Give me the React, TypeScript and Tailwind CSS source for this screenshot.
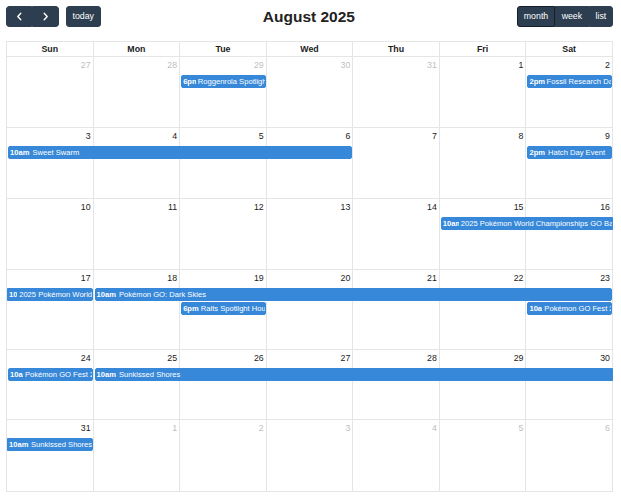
import React from 'react';

type CalEvent = {
  col: number;
  span: number;
  level: 1 | 2;
  time: string;
  title: string;
  start?: boolean;
  end?: boolean;
};

type Week = {
  height: string;
  days: { n: number; other?: boolean }[];
  events: CalEvent[];
};

const COL_START = ['', 'col-start-1', 'col-start-2', 'col-start-3', 'col-start-4', 'col-start-5', 'col-start-6', 'col-start-7'];
const COL_SPAN = ['', 'col-span-1', 'col-span-2', 'col-span-3', 'col-span-4', 'col-span-5', 'col-span-6', 'col-span-7'];
const LEVEL_ROW = { 1: 'row-start-2', 2: 'row-start-3' };

const DAY_NAMES = ['Sun', 'Mon', 'Tue', 'Wed', 'Thu', 'Fri', 'Sat'];

const WORLDS = '2025 Pokémon World Championships GO Battle Weekend';
const FEST = 'Pokémon GO Fest 2025: Global';

const WEEKS: Week[] = [
  {
    height: 'h-[71px]',
    days: [{ n: 27, other: true }, { n: 28, other: true }, { n: 29, other: true }, { n: 30, other: true }, { n: 31, other: true }, { n: 1 }, { n: 2 }],
    events: [
      { col: 3, span: 1, level: 1, time: '6pm', title: 'Roggenrola Spotlight Hour' },
      { col: 7, span: 1, level: 1, time: '2pm', title: 'Fossil Research Day' },
    ],
  },
  {
    height: 'h-[71px]',
    days: [3, 4, 5, 6, 7, 8, 9].map((n) => ({ n })),
    events: [
      { col: 1, span: 4, level: 1, time: '10am', title: 'Sweet Swarm' },
      { col: 7, span: 1, level: 1, time: '2pm', title: 'Hatch Day Event' },
    ],
  },
  {
    height: 'h-[71px]',
    days: [10, 11, 12, 13, 14, 15, 16].map((n) => ({ n })),
    events: [{ col: 6, span: 2, level: 1, time: '10am', title: WORLDS, end: false }],
  },
  {
    height: 'h-[80px]',
    days: [17, 18, 19, 20, 21, 22, 23].map((n) => ({ n })),
    events: [
      { col: 1, span: 1, level: 1, time: '10am', title: WORLDS, start: false },
      { col: 2, span: 6, level: 1, time: '10am', title: 'Pokémon GO: Dark Skies' },
      { col: 3, span: 1, level: 2, time: '6pm', title: 'Ralts Spotlight Hour' },
      { col: 7, span: 1, level: 2, time: '10am', title: FEST },
    ],
  },
  {
    height: 'h-[70px]',
    days: [24, 25, 26, 27, 28, 29, 30].map((n) => ({ n })),
    events: [
      { col: 1, span: 1, level: 1, time: '10am', title: FEST },
      { col: 2, span: 6, level: 1, time: '10am', title: 'Sunkissed Shores', end: false },
    ],
  },
  {
    height: 'h-[72px]',
    days: [{ n: 31 }, { n: 1, other: true }, { n: 2, other: true }, { n: 3, other: true }, { n: 4, other: true }, { n: 5, other: true }, { n: 6, other: true }],
    events: [{ col: 1, span: 1, level: 1, time: '10am', title: 'Sunkissed Shores', start: false }],
  },
];

const Chevron = ({ dir }: { dir: 'left' | 'right' }) => (
  <svg width="13" height="13" viewBox="0 0 13 13" fill="none" stroke="currentColor" strokeWidth="1.4" strokeLinecap="round" strokeLinejoin="round">
    {dir === 'left' ? <path d="M7.8 3.3 L4.8 6.5 L7.8 9.7" /> : <path d="M5.2 3.3 L8.2 6.5 L5.2 9.7" />}
  </svg>
);

const btn = 'bg-[#2c3e50] border border-[#2c3e50] text-white text-[8.8px] leading-[13px] py-[3px] px-[5.7px]';

function EventBar({ ev }: { ev: CalEvent }) {
  const starts = ev.start !== false;
  const ends = ev.end !== false;
  return (
    <div
      className={[
        LEVEL_ROW[ev.level],
        COL_START[ev.col],
        COL_SPAN[ev.span],
        'mt-[1px] h-[13px] min-w-0 overflow-hidden flex bg-[#3788d8] border border-[#3788d8] text-white text-[7.6px] leading-[9px] whitespace-nowrap',
        starts ? 'ml-[1px] rounded-l-[2px]' : '',
        ends ? 'mr-[1px] rounded-r-[2px]' : '',
      ].join(' ')}
    >
      <div className="font-bold p-[1px] mr-[1px] overflow-hidden whitespace-nowrap">{ev.time}</div>
      <div className="grow shrink min-w-0">
        <div className="inline-block align-top max-w-full overflow-hidden whitespace-nowrap p-[1px]">{ev.title}</div>
      </div>
    </div>
  );
}

export default function App() {
  return (
    <div className="w-[621px] h-[500px] bg-white pl-[6px] pr-[8px] pt-[6px] text-[#222]" style={{ fontFamily: '"Liberation Sans", Arial, sans-serif' }}>
      {/* toolbar */}
      <div className="flex items-center justify-between mb-[14px]">
        <div className="flex items-center gap-[7px]">
          <div className="flex rounded-[3px] overflow-hidden">
            <button className={btn + ' rounded-l-[3px]'} aria-label="prev">
              <Chevron dir="left" />
            </button>
            <button className={btn + ' rounded-r-[3px]'} aria-label="next">
              <Chevron dir="right" />
            </button>
          </div>
          <button className={btn + ' rounded-[3px]'}>today</button>
        </div>
        <h2 className="text-[15.5px] font-bold leading-[20px] text-[#222]">August 2025</h2>
        <div className="flex">
          <button className={btn + ' rounded-l-[3px] bg-[#1a252f] border-[#151e27]'}>month</button>
          <button className={btn}>week</button>
          <button className={btn + ' rounded-r-[3px]'}>list</button>
        </div>
      </div>

      {/* grid */}
      <div className="border-l border-t border-[#e5e5e5]">
        <div className="grid grid-cols-7">
          {DAY_NAMES.map((d) => (
            <div key={d} className="border-r border-b border-[#e5e5e5] text-center font-bold text-[8.8px] leading-[10px] py-[2px]">
              {d}
            </div>
          ))}
        </div>
        {WEEKS.map((w, wi) => (
          <div key={wi} className={'grid grid-cols-7 grid-rows-[17px_14px_14px_1fr] border-b border-[#e5e5e5] ' + w.height}>
            {w.days.map((d, di) => (
              <div key={'bg' + di} className={'row-span-full border-r border-[#e5e5e5] ' + COL_START[di + 1]} />
            ))}
            {w.days.map((d, di) => (
              <div
                key={'n' + di}
                className={'row-start-1 text-right text-[8.8px] leading-[13px] pt-[2px] pr-[3px] ' + COL_START[di + 1] + (d.other ? ' opacity-30' : '')}
              >
                {d.n}
              </div>
            ))}
            {w.events.map((ev, ei) => (
              <EventBar key={'e' + ei} ev={ev} />
            ))}
          </div>
        ))}
      </div>
    </div>
  );
}
